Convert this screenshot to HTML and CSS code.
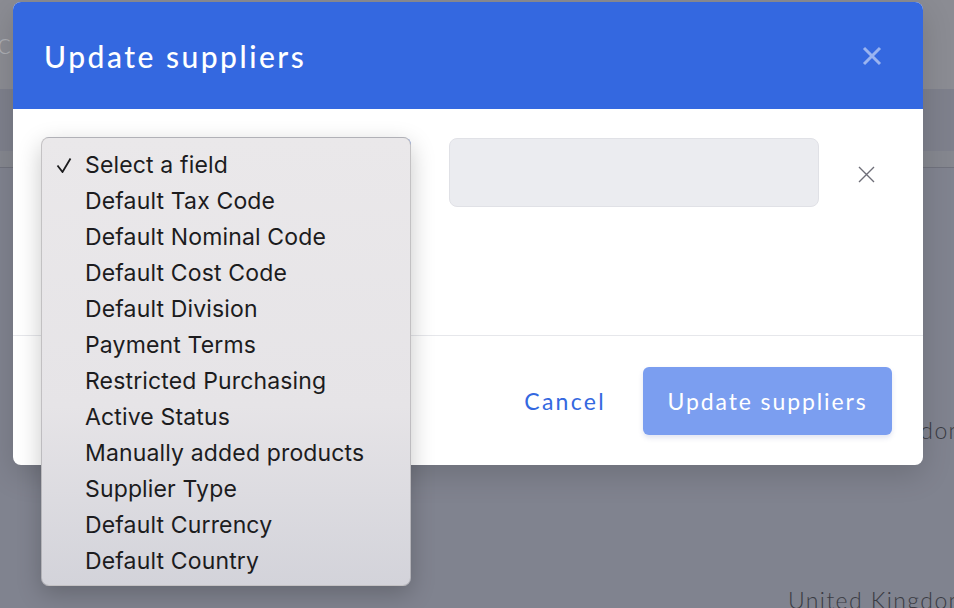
FILE: index.html
```html
<!DOCTYPE html>
<html lang="en">
<head>
<meta charset="utf-8">
<title>Update suppliers</title>
<link rel="stylesheet" href="styles.css">
</head>
<body>
<div class="page">
  <header class="page-head"><span class="page-title">c</span></header>
  <div class="page-toolbar"></div>
  <div class="page-strip"></div>
  <div class="table">
    <div class="row"><span class="cell">United Kingdom</span></div>
    <div class="row"><span class="cell">United Kingdom</span></div>
  </div>
</div>

<div class="modal">
  <div class="modal-head">
    <h1 class="modal-title">Update suppliers</h1>
    <button class="head-close" type="button" aria-label="Close">
      <svg width="20" height="20" viewBox="0 0 20 20"><path d="M2 2L18 18M18 2L2 18" stroke="#ffffff" stroke-opacity="0.5" stroke-width="3" fill="none"/></svg>
    </button>
  </div>
  <div class="modal-body">
    <div class="field-row">
      <div class="select"></div>
      <div class="input"></div>
      <button class="remove" type="button" aria-label="Remove">
        <svg width="17" height="17" viewBox="0 0 17 17"><path d="M1 1L16 16M16 1L1 16" stroke="#6e6e78" stroke-width="1.4" fill="none"/></svg>
      </button>
    </div>
  </div>
  <div class="modal-foot">
    <button class="cancel" type="button">Cancel</button>
    <button class="primary" type="button">Update suppliers</button>
  </div>
</div>

<ul class="menu">
  <li class="item"><span class="check"><svg width="16" height="16" viewBox="0 0 16 16"><path d="M1.5 8.5L6.5 15L14.5 1.5" stroke="#1c1c1e" stroke-width="1.8" fill="none"/></svg></span><span>Select a field</span></li>
  <li class="item"><span class="check"></span><span>Default Tax Code</span></li>
  <li class="item"><span class="check"></span><span>Default Nominal Code</span></li>
  <li class="item"><span class="check"></span><span>Default Cost Code</span></li>
  <li class="item"><span class="check"></span><span>Default Division</span></li>
  <li class="item"><span class="check"></span><span>Payment Terms</span></li>
  <li class="item"><span class="check"></span><span>Restricted Purchasing</span></li>
  <li class="item"><span class="check"></span><span>Active Status</span></li>
  <li class="item"><span class="check"></span><span>Manually added products</span></li>
  <li class="item"><span class="check"></span><span>Supplier Type</span></li>
  <li class="item"><span class="check"></span><span>Default Currency</span></li>
  <li class="item"><span class="check"></span><span>Default Country</span></li>
</ul>
</body>
</html>
```
FILE: styles.css
```css
* { box-sizing: border-box; }
html, body { margin: 0; padding: 0; }
body {
  width: 954px;
  height: 608px;
  overflow: hidden;
  position: relative;
  background: #80838f;
  font-family: Lato, "Open Sans", sans-serif;
}
.page-head {
  height: 89px;
  background: #8b8c93;
  display: flex;
  align-items: center;
}
.page-title {
  font-size: 30px;
  font-weight: 300;
  color: #adaeb3;
  margin-left: -3px;
  margin-top: -6px;
}
.page-toolbar { height: 62px; background: #7e808c; }
.page-strip { height: 17px; background: #85878f; border-bottom: 1px solid #70727d; }
.table { padding-top: 250px; }
.row {
  height: 170px;
  padding-left: 788px;
  font-size: 23px;
  font-weight: 300;
  letter-spacing: 1.4px;
  line-height: 24px;
  color: #3a3b43;
  white-space: nowrap;
}

.modal {
  position: absolute;
  left: 13px;
  top: 2px;
  width: 910px;
  height: 463px;
  background: #fff;
  border-radius: 8px;
  overflow: hidden;
  box-shadow: 0 10px 30px rgba(0,0,0,0.15);
  display: flex;
  flex-direction: column;
}
.modal-head {
  height: 107px;
  flex: none;
  background: #3468e0;
  display: flex;
  align-items: center;
  justify-content: space-between;
  padding: 0 41px 0 31px;
}
.modal-title {
  margin: 0;
  color: #fff;
  font-weight: 500;
  font-size: 30px;
  letter-spacing: 2.5px;
}
.head-close, .remove, .cancel, .primary {
  border: 0;
  background: none;
  padding: 0;
  font-family: inherit;
  cursor: pointer;
}
.head-close { width: 20px; height: 20px; display: flex; }
.modal-body {
  height: 227px;
  flex: none;
  padding: 28px 29px;
  border-bottom: 1px solid #e6e7eb;
}
.field-row {
  display: flex;
  align-items: center;
  gap: 38px;
}
.select {
  width: 369px;
  height: 71px;
  border: 1px solid #d1d3d9;
  border-right: 2px solid #3b6fe6;
  border-radius: 8px;
}
.input {
  width: 370px;
  height: 69px;
  background: #ebecf0;
  border: 1px solid #e0e1e6;
  border-radius: 8px;
}
.remove { width: 17px; height: 17px; display: flex; margin: 4px 0 0 1px; }
.modal-foot {
  flex: 1;
  display: flex;
  align-items: center;
  justify-content: flex-end;
  gap: 37px;
  padding-right: 31px;
}
.cancel {
  color: #3468e0;
  font-size: 23px;
  letter-spacing: 2.3px;
}
.primary {
  width: 249px;
  height: 68px;
  border-radius: 6px;
  background: #7b9ef0;
  color: #fff;
  font-size: 23px;
  letter-spacing: 1.9px;
  box-shadow: 0 3px 5px rgba(60,80,160,0.15);
}

.menu {
  position: absolute;
  left: 41px;
  top: 137px;
  width: 370px;
  height: 449px;
  margin: 0;
  padding: 9px 0 8px;
  list-style: none;
  border-radius: 8px;
  border: 1px solid rgba(0,0,0,0.16);
  background: linear-gradient(to bottom, #eae8ea 0%, #e6e4e7 60%, #d3d3da 100%);
  box-shadow: 0 8px 24px rgba(0,0,0,0.22);
  font-family: Inter, "Liberation Sans", sans-serif;
  font-size: 23px;
  letter-spacing: 0.15px;
  color: #1c1c1e;
}
.item {
  height: 36px;
  display: grid;
  grid-template-columns: 43px 1fr;
  align-items: center;
  white-space: nowrap;
}
.check { display: flex; padding-left: 14px; }
.check svg { display: block; }
```
